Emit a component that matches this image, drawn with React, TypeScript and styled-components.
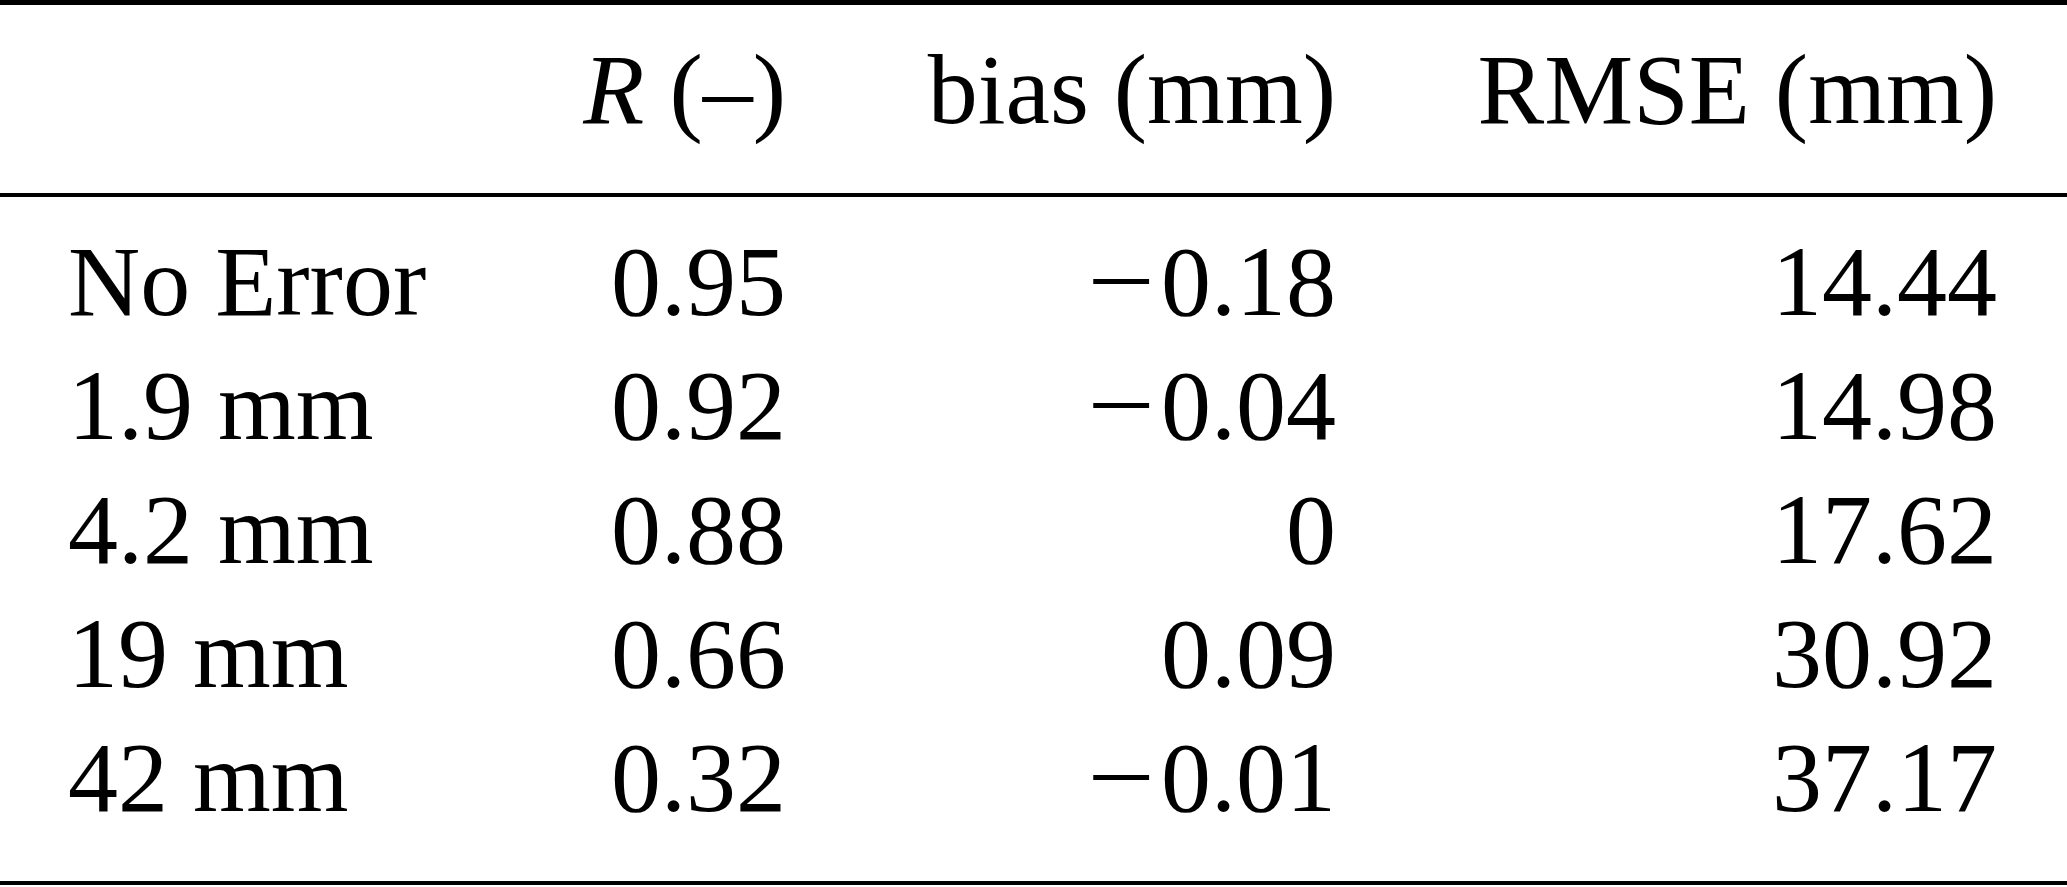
import styled, { createGlobalStyle } from 'styled-components';

const GlobalStyle = createGlobalStyle`
    html, body {
        margin: 0;
        padding: 0;
        background: #fff;
    }
`;

const Sheet = styled.div`
    width: 2067px;
    border-top: 5px solid #000;
    border-bottom: 4px solid #000;
    font-family: "Liberation Serif", "Times New Roman", serif;
    font-size: 100px;
    line-height: 124px;
    color: #000;
`;

const Table = styled.table`
    width: 100%;
    table-layout: fixed;
    border-collapse: separate;
    border-spacing: 0;
`;

const HeadCell = styled.th<{ $first?: boolean; $last?: boolean }>`
    font-weight: normal;
    white-space: nowrap;
    text-align: ${p => (p.$first ? 'left' : 'right')};
    padding: 23px ${p => (p.$last ? '70px' : '0')} 41px ${p => (p.$first ? '68px' : '0')};
    border-bottom: 4.5px solid #000;
`;

const Cell = styled.td<{ $first?: boolean; $last?: boolean; $top?: boolean; $bottom?: boolean }>`
    white-space: nowrap;
    text-align: ${p => (p.$first ? 'left' : 'right')};
    padding-left: ${p => (p.$first ? '68px' : '0')};
    padding-right: ${p => (p.$last ? '70px' : '0')};
    padding-top: ${p => (p.$top ? '23px' : '0')};
    padding-bottom: ${p => (p.$bottom ? '41px' : '0')};
`;

const Var = styled.span`
    font-style: italic;
`;

// math minus is wider than the text one, stretch it a bit
const Minus = styled.span`
    display: inline-block;
    transform: scaleX(1.2);
    margin-right: 12px;
`;

type Row = {
    label: string,
    r: string,
    bias: number,
    rmse: string,
};

const rows: Row[] = [
    { label: 'No Error', r: '0.95', bias: -0.18, rmse: '14.44' },
    { label: '1.9 mm', r: '0.92', bias: -0.04, rmse: '14.98' },
    { label: '4.2 mm', r: '0.88', bias: 0, rmse: '17.62' },
    { label: '19 mm', r: '0.66', bias: 0.09, rmse: '30.92' },
    { label: '42 mm', r: '0.32', bias: -0.01, rmse: '37.17' },
];

const Bias = ({ value }: { value: number }) => {
    if (value === 0) return <>0</>;
    const text = Math.abs(value).toFixed(2);
    return value < 0 ? <><Minus>{'\u2212'}</Minus>{text}</> : <>{text}</>;
};

const App = () => {
    return <>
        <GlobalStyle />
        <Sheet>
            <Table>
                <colgroup>
                    <col style={{ width: 560 }} />
                    <col style={{ width: 226 }} />
                    <col style={{ width: 550 }} />
                    <col style={{ width: 731 }} />
                </colgroup>
                <thead>
                    <tr>
                        <HeadCell $first></HeadCell>
                        <HeadCell><Var>R</Var> (–)</HeadCell>
                        <HeadCell>bias (mm)</HeadCell>
                        <HeadCell $last>RMSE (mm)</HeadCell>
                    </tr>
                </thead>
                <tbody>
                    {rows.map((row, i) => {
                        const top = i === 0;
                        const bottom = i === rows.length - 1;
                        return <tr key={row.label}>
                            <Cell $first $top={top} $bottom={bottom}>{row.label}</Cell>
                            <Cell $top={top} $bottom={bottom}>{row.r}</Cell>
                            <Cell $top={top} $bottom={bottom}><Bias value={row.bias} /></Cell>
                            <Cell $last $top={top} $bottom={bottom}>{row.rmse}</Cell>
                        </tr>
                    })}
                </tbody>
            </Table>
        </Sheet>
    </>
}

export default App;
